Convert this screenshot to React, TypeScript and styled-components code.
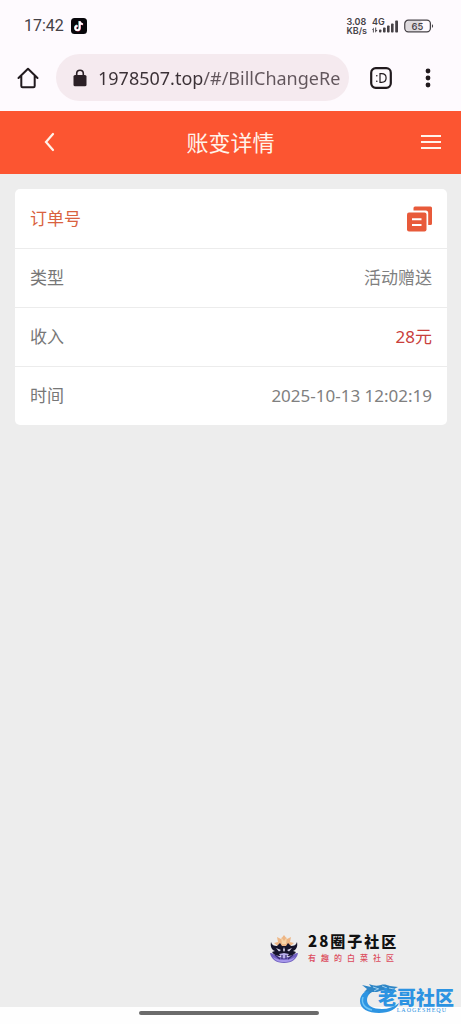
import React from 'react';
import styled, { createGlobalStyle } from 'styled-components';

const GlobalStyle = createGlobalStyle`
  * { box-sizing: border-box; }
  html, body { margin: 0; padding: 0; }
  body {
    font-family: 'Noto Sans', 'Noto Sans CJK SC', sans-serif;
    background: #ededed;
  }
  button { border: 0; padding: 0; background: none; cursor: pointer; font: inherit; }
  svg { display: block; flex: none; }
`;

const Screen = styled.div`
  position: relative;
  display: flex;
  flex-direction: column;
  min-height: 100vh;
  background: #ededed;
`;

const StatusBar = styled.div`
  display: flex;
  align-items: center;
  justify-content: space-between;
  height: 52px;
  padding: 0 27px 0 24px;
  background: #fefafe;
  color: #454146;
`;

const StatusGroup = styled.div<{ $gap: number }>`
  display: flex;
  align-items: center;
  gap: ${(p) => p.$gap}px;
`;

const Clock = styled.span`
  font-family: Roboto, sans-serif;
  font-size: 16px;
  line-height: 20px;
`;

const NetSpeed = styled.span`
  display: flex;
  flex-direction: column;
  font-family: Inter, sans-serif;
  font-size: 9px;
  font-weight: 600;
  line-height: 9px;
`;

const BrowserBar = styled.div`
  display: flex;
  align-items: center;
  height: 59px;
  padding: 0 18px 8px 17px;
  background: #fefafe;
  color: #211a1e;
`;

const AddressBox = styled.label`
  display: flex;
  flex: 1;
  align-items: center;
  gap: 11px;
  min-width: 0;
  height: 47px;
  margin: 0 21px 0 17px;
  padding: 0 8px 0 17px;
  border-radius: 24px;
  background: #f5eaef;
`;

const AddressInput = styled.input`
  flex: 1;
  min-width: 0;
  height: 30px;
  padding: 0;
  border: 0;
  outline: 0;
  font-family: 'Noto Sans', sans-serif;
  font-size: 18px;
  color: #2b2227;
  background: linear-gradient(90deg, #3a3035 105px, #61555b 105px);
  background-clip: text;
  -webkit-text-fill-color: transparent;
`;

const IconButton = styled.button<{ $width: number }>`
  display: flex;
  align-items: center;
  justify-content: center;
  width: ${(p) => p.$width}px;
  height: 32px;
  color: inherit;
`;

const TabsButton = styled(IconButton)`
  margin-right: 21px;
`;

const PageHeader = styled.header`
  display: grid;
  grid-template-columns: 68px 1fr 68px;
  align-items: center;
  height: 63px;
  padding-bottom: 2px;
  background: #fc5531;
  color: #fff3ea;
`;

const HeaderButton = styled.button<{ $side: 'left' | 'right' }>`
  display: flex;
  align-items: center;
  justify-content: flex-end;
  height: 44px;
  padding-right: ${(p) => (p.$side === 'left' ? 13 : 20)}px;
  color: inherit;
`;

const Title = styled.h1`
  margin: 0;
  text-align: center;
  font-size: 22px;
  font-weight: 400;
  line-height: 32px;
`;

const Main = styled.main`
  flex: 1;
  padding: 15px 14px 15px 15px;
`;

const Card = styled.dl`
  margin: 0;
  border-radius: 5px;
  background: #fff;
`;

const Row = styled.div`
  display: flex;
  align-items: center;
  justify-content: space-between;
  height: 59px;
  padding: 0 15px;
  font-size: 17px;
  line-height: 24px;

  & + & { border-top: 1px solid #ececec; }
`;

const Label = styled.dt<{ $accent?: boolean }>`
  color: ${(p) => (p.$accent ? '#d9623f' : '#777')};
`;

const Value = styled.dd<{ $income?: boolean }>`
  margin: 0;
  color: ${(p) => (p.$income ? '#c9403c' : '#808080')};
`;

const GestureBar = styled.div`
  display: flex;
  justify-content: center;
  height: 17px;
  padding-top: 4px;
  background: #fefefe;
`;

const GestureHandle = styled.div`
  width: 39%;
  height: 4px;
  margin-right: 3px;
  border-radius: 2px;
  background: #6b6b6b;
`;

const CircleMark = styled.div`
  position: absolute;
  right: 62px;
  bottom: 58px;
  display: flex;
  align-items: center;
  gap: 9px;
`;

const CircleText = styled.div`
  display: flex;
  flex-direction: column;
  font-family: 'Noto Sans CJK SC', sans-serif;
`;

const CircleName = styled.strong`
  font-size: 15px;
  font-weight: 900;
  line-height: 18px;
  letter-spacing: 2px;
  color: #111;
`;

const CircleMotto = styled.span`
  font-size: 8px;
  font-weight: 500;
  line-height: 16px;
  letter-spacing: 5px;
  color: #dc4b5d;
`;

const DragonMark = styled.div`
  position: absolute;
  right: 7px;
  bottom: 10px;
  display: flex;
  align-items: flex-start;
  color: #2c93e2;
`;

const DragonArt = styled.svg`
  margin-right: -26px;
`;

const DragonText = styled.div`
  display: flex;
  flex-direction: column;
  align-items: flex-end;
  padding-top: 4px;
`;

const DragonName = styled.strong`
  font-family: 'Noto Sans CJK SC', sans-serif;
  font-size: 19px;
  font-weight: 900;
  line-height: 20px;
`;

const DragonLatin = styled.span`
  padding-right: 7px;
  font-family: 'Liberation Serif', serif;
  font-size: 6px;
  line-height: 6px;
  letter-spacing: 1px;
`;

const records = [
  { label: '类型', value: '活动赠送' },
  { label: '收入', value: '28元', income: true },
  { label: '时间', value: '2025-10-13 12:02:19' },
];

const TikTokIcon = () => (
  <svg width="16" height="16" viewBox="0 0 16 16" aria-hidden="true">
    <rect width="16" height="16" rx="3.5" fill="#08070b" />
    <g fill="none" strokeWidth="1.8">
      <path d="M8.3 3v6.7a2.2 2.2 0 1 1-2.2-2.2M8.3 3.2c.3 1.7 1.5 2.7 3.1 2.8" stroke="#62d8de" />
      <path d="M9.1 3.4v6.9a2.2 2.2 0 1 1-2.2-2.2M9.1 3.7c.3 1.7 1.5 2.7 3.1 2.8" stroke="#e1476b" />
      <path d="M8.7 3.2v6.8a2.2 2.2 0 1 1-2.2-2.2M8.7 3.4c.3 1.7 1.5 2.7 3.1 2.8" stroke="#fff" />
    </g>
  </svg>
);

const SignalIcon = () => (
  <svg width="27" height="18" viewBox="0 0 27 18" role="img" aria-label="4G">
    <text x="0" y="8" fontFamily="Inter, sans-serif" fontSize="9" fontWeight="600" fill="currentColor">4G</text>
    <g fill="currentColor">
      <path d="M0 13l1.800-2.500V15.500H.9V13zM3.200 10.500h1V13h1.300l-2.300 2.700z" />
      <rect x="7" y="12.500" width="2.400" height="3" rx=".8" />
      <rect x="11" y="10.500" width="2.600" height="5" rx=".8" />
      <rect x="15" y="8.500" width="2.600" height="7" rx=".8" />
      <rect x="19" y="6.500" width="2.600" height="9" rx=".8" />
      <rect x="23.200" y="3.500" width="2.800" height="12" rx=".8" />
    </g>
  </svg>
);

const BatteryIcon = () => (
  <svg width="30" height="14" viewBox="0 0 30 14" role="img" aria-label="65%">
    <rect x="2" y="2" width="16" height="10" rx="2.500" fill="#dedade" />
    <rect x=".8" y="1.200" width="25.600" height="11.600" rx="3.500" fill="none" stroke="currentColor" strokeWidth="1.300" />
    <path d="M28 5.200c1.400.3 1.400 3.300 0 3.600z" fill="currentColor" />
    <text x="13.500" y="10.500" textAnchor="middle" fontFamily="Inter, sans-serif" fontSize="9.500" fontWeight="500" fill="currentColor">65</text>
  </svg>
);

const HomeIcon = () => (
  <svg width="22" height="22" viewBox="0 0 22 22" fill="none" stroke="currentColor" strokeWidth="2" strokeLinejoin="round" strokeLinecap="round" aria-hidden="true">
    <path d="M1.500 11L11 1.800 20.500 11M4.300 9v10q0 1.300 1.300 1.300h10.800q1.300 0 1.300-1.300V9" />
  </svg>
);

const LockIcon = () => (
  <svg width="14" height="18" viewBox="0 0 14 18" aria-hidden="true">
    <path d="M3.700 7V4.500a3.300 3.300 0 0 1 6.600 0V7" fill="none" stroke="#2b2026" strokeWidth="1.600" />
    <rect x=".5" y="6" width="13" height="11.300" rx="1.600" fill="#2b2026" />
  </svg>
);

const TabsIcon = () => (
  <svg width="22" height="22" viewBox="0 0 22 22" aria-hidden="true">
    <rect x="1.200" y="1.200" width="19.600" height="19.600" rx="4.500" fill="none" stroke="currentColor" strokeWidth="2.200" />
    <circle cx="6.800" cy="8.700" r=".8" fill="currentColor" />
    <circle cx="6.800" cy="14.200" r=".8" fill="currentColor" />
    <path d="M10 6.700v8.600h1.600c3 0 4.500-1.500 4.500-4.300s-1.500-4.300-4.500-4.300z" fill="none" stroke="currentColor" strokeWidth="1.200" />
  </svg>
);

const MoreIcon = () => (
  <svg width="6" height="20" viewBox="0 0 6 20" fill="currentColor" aria-hidden="true">
    <circle cx="3" cy="3" r="2.400" />
    <circle cx="3" cy="10" r="2.400" />
    <circle cx="3" cy="17" r="2.400" />
  </svg>
);

const BackIcon = () => (
  <svg width="12" height="20" viewBox="0 0 12 20" fill="none" stroke="currentColor" strokeWidth="2.200" strokeLinecap="round" aria-hidden="true">
    <path d="M10 2L3 10l7 8" />
  </svg>
);

const MenuIcon = () => (
  <svg width="20" height="14" viewBox="0 0 20 14" fill="currentColor" aria-hidden="true">
    <rect y="0" width="20" height="2" />
    <rect y="6" width="20" height="2" />
    <rect y="12" width="20" height="2" />
  </svg>
);

const CopyIcon = () => (
  <svg width="25" height="26" viewBox="0 0 25 26" aria-hidden="true">
    <path d="M6.500 4.500V2Q6.500.5 8 .5h15.500Q25 .5 25 2v15.500q0 1.500-1.500 1.500h-2.300V7q0-2.500-2.500-2.500z" fill="#e85a3a" />
    <rect y="6.500" width="19.500" height="19" rx="2" fill="#e85a3a" />
    <path d="M5 13.300h9.500M5 19h9.500" stroke="#fff" strokeWidth="1.900" />
  </svg>
);

const LotusLogo = () => (
  <svg width="30" height="30" viewBox="0 0 30 30" aria-hidden="true">
    <path d="M15 1l3 4 4-2-1 5 4 1-5 4H10L5 9l4-1-1-5 4 2z" fill="#edb686" />
    <path d="M12 3l3 4 3-4-1 7h-4z" fill="#f6d4a8" />
    <path d="M1 19c3 0 5 2 7 3l7 2 7-2c2-1 4-3 7-3-1 6-6 10-14 10S2 25 1 19z" fill="#7161c0" />
    <path d="M4 23c5 4 17 4 22 0-2 4-6 5-11 5S6 27 4 23z" fill="#a697ea" />
    <path d="M2 8c1 3 3 4 6 4l3-3 2 3h4l2-3 3 3c3 0 5-1 6-4 1 5-1 8-4 9l3 1c-2 3-5 4-8 4h-8c-3 0-6-1-8-4l3-1C3 16 1 13 2 8z" fill="#15142b" />
    <path d="M7 14l5 2-2 1.500zM23 14l-5 2 2 1.500zM15 13l1 3-1 2-1-2z" fill="#d9d6ec" />
    <path d="M10 20l5-1 5 1-3 4h-4z" fill="#b8aeea" />
    <path d="M6 21l5 4M24 21l-5 4M13 21v4M17 21v4" stroke="#33296b" strokeWidth="1.200" fill="none" />
  </svg>
);

const Dragon = () => (
  <DragonArt width="44" height="31" viewBox="0 0 44 31" aria-hidden="true">
    <path d="M13 5C5 7 0 12 0 18c0 8 8 12 19 12 10 0 18-4 20-10-5 4-11 6-17 6-9 0-15-3-15-9 0-4 3-8 9-10z" fill="#2d94e2" />
    <path d="M2 2l9 2-2-3c5 2 8 2 12 1 3-1 6 0 9 1l8 1-4 2 3 3-5-1-4 1-5-2-6 2-5 0-4 2 1-3-5 1 3-3z" fill="#2f86c6" />
    <path d="M13 4l6 2M22 3l5 2M29 5l5 1M18 6l-4 2" stroke="#9ccff0" strokeWidth="1" fill="none" />
    <path d="M3 14c-2 6 1 11 9 13" stroke="#6cc4f6" strokeWidth="1.500" fill="none" />
  </DragonArt>
);

export default function App() {
  return (
    <>
      <GlobalStyle />
      <Screen>
        <StatusBar>
          <StatusGroup $gap={7}>
            <Clock>17:42</Clock>
            <TikTokIcon />
          </StatusGroup>
          <StatusGroup $gap={5}>
            <NetSpeed>
              <span>3.08</span>
              <span>KB/s</span>
            </NetSpeed>
            <SignalIcon />
            <BatteryIcon />
          </StatusGroup>
        </StatusBar>

        <BrowserBar>
          <IconButton type="button" aria-label="Home" $width={22}>
            <HomeIcon />
          </IconButton>
          <AddressBox>
            <LockIcon />
            <AddressInput type="text" aria-label="Address" readOnly value="1978507.top/#/BillChangeRecord" />
          </AddressBox>
          <TabsButton type="button" aria-label="Tabs" $width={22}>
            <TabsIcon />
          </TabsButton>
          <IconButton type="button" aria-label="More" $width={30}>
            <MoreIcon />
          </IconButton>
        </BrowserBar>

        <PageHeader>
          <HeaderButton type="button" aria-label="返回" $side="left">
            <BackIcon />
          </HeaderButton>
          <Title>账变详情</Title>
          <HeaderButton type="button" aria-label="菜单" $side="right">
            <MenuIcon />
          </HeaderButton>
        </PageHeader>

        <Main>
          <Card>
            <Row>
              <Label $accent>订单号</Label>
              <Value>
                <IconButton type="button" aria-label="复制订单号" $width={25}>
                  <CopyIcon />
                </IconButton>
              </Value>
            </Row>
            {records.map((r) => (
              <Row key={r.label}>
                <Label>{r.label}</Label>
                <Value $income={r.income}>{r.value}</Value>
              </Row>
            ))}
          </Card>
        </Main>

        <GestureBar>
          <GestureHandle />
        </GestureBar>

        <CircleMark>
          <LotusLogo />
          <CircleText>
            <CircleName>28圈子社区</CircleName>
            <CircleMotto>有趣的白菜社区</CircleMotto>
          </CircleText>
        </CircleMark>

        <DragonMark>
          <Dragon />
          <DragonText>
            <DragonName>老哥社区</DragonName>
            <DragonLatin>LAOGESHEQU</DragonLatin>
          </DragonText>
        </DragonMark>
      </Screen>
    </>
  );
}
